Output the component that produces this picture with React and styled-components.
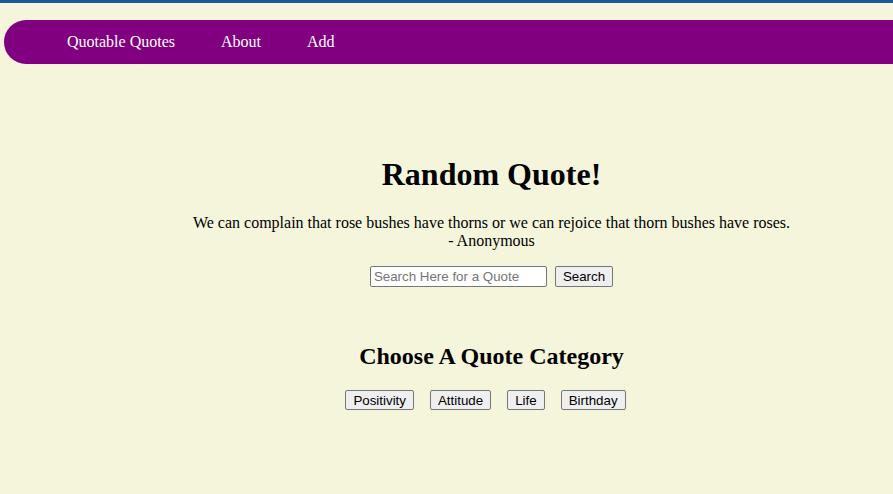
import React from 'react';
import styled, { createGlobalStyle } from 'styled-components';

const colors = {
  pageBg: '#f5f5dc',
  topStrip: '#1f5799',
  navBg: '#800080',
  text: '#000000',
  buttonBg: '#efefef',
  buttonBorder: '#767676',
};

const GlobalStyle = createGlobalStyle`
  html, body {
    margin: 0;
    padding: 0;
    background-color: ${colors.pageBg};
    font-family: "Liberation Serif", "Times New Roman", serif;
    color: ${colors.text};
    overflow: hidden;
  }
`;

const Page = styled.div`
  min-height: 494px;
  border-top: 3px solid ${colors.topStrip};
`;

const NavBar = styled.nav`
  display: flex;
  align-items: center;
  height: 44px;
  margin: 17px 0 0 4px;
  background-color: ${colors.navBg};
  border-radius: 22px 0 0 22px;
`;

const NavList = styled.ul`
  display: flex;
  align-items: center;
  list-style: none;
  margin: 0;
  padding: 0 0 0 40px;
`;

const NavLink = styled.a`
  display: block;
  padding: 0 23px;
  color: white;
  font-size: 16px;
  text-decoration: none;
  cursor: pointer;
`;

const Main = styled.main`
  padding: 69px 0 0 90px;
  text-align: center;
`;

const Title = styled.h1`
  margin: 23px 0 21px;
  font-size: 32px;
  font-weight: bold;
`;

const QuoteText = styled.p`
  margin: 0;
  font-size: 16px;
  line-height: 18px;
`;

const SearchForm = styled.form`
  display: flex;
  justify-content: center;
  align-items: center;
  gap: 8px;
  margin: 16px 0 0;
`;

const SearchInput = styled.input`
  box-sizing: border-box;
  width: 177px;
  height: 21px;
  padding: 1px 3px;
  border: 1px solid ${colors.buttonBorder};
  border-radius: 2px;
  background: white;
  font-family: "Liberation Sans", Arial, sans-serif;
  font-size: 13.33px;

  ::placeholder {
    color: #757575;
  }
`;

const Button = styled.button`
  box-sizing: border-box;
  height: ${(p) => (p.small ? 20 : 21)}px;
  padding: 1px 7px;
  margin-right: ${(p) => (p.trail ? 12 : 0)}px;
  border: 1px solid ${colors.buttonBorder};
  border-radius: 2px;
  background-color: ${colors.buttonBg};
  font-family: "Liberation Sans", Arial, sans-serif;
  font-size: 13.33px;
  color: black;
  cursor: pointer;
`;

const SectionTitle = styled.h2`
  margin: 56px 0 20px;
  font-size: 24px;
  font-weight: bold;
`;

const CategoryRow = styled.div`
  display: flex;
  justify-content: center;
  gap: 4px;
`;

const categories = ['Positivity', 'Attitude', 'Life', 'Birthday'];

export default function App() {
  return (
    <>
      <GlobalStyle />
      <Page>
        <NavBar>
          <NavList>
            <li><NavLink>Quotable Quotes</NavLink></li>
            <li><NavLink>About</NavLink></li>
            <li><NavLink>Add</NavLink></li>
          </NavList>
        </NavBar>
        <Main>
          <Title>Random Quote!</Title>
          <QuoteText>
            We can complain that rose bushes have thorns or we can rejoice that thorn bushes have roses.
          </QuoteText>
          <QuoteText>- Anonymous</QuoteText>
          <SearchForm onSubmit={(e) => e.preventDefault()}>
            <SearchInput type="text" placeholder="Search Here for a Quote" />
            <Button type="submit">Search</Button>
          </SearchForm>
          <SectionTitle>Choose A Quote Category</SectionTitle>
          <CategoryRow>
            {categories.map((c) => (
              <Button key={c} small trail type="button">{c}</Button>
            ))}
          </CategoryRow>
        </Main>
      </Page>
    </>
  );
}
